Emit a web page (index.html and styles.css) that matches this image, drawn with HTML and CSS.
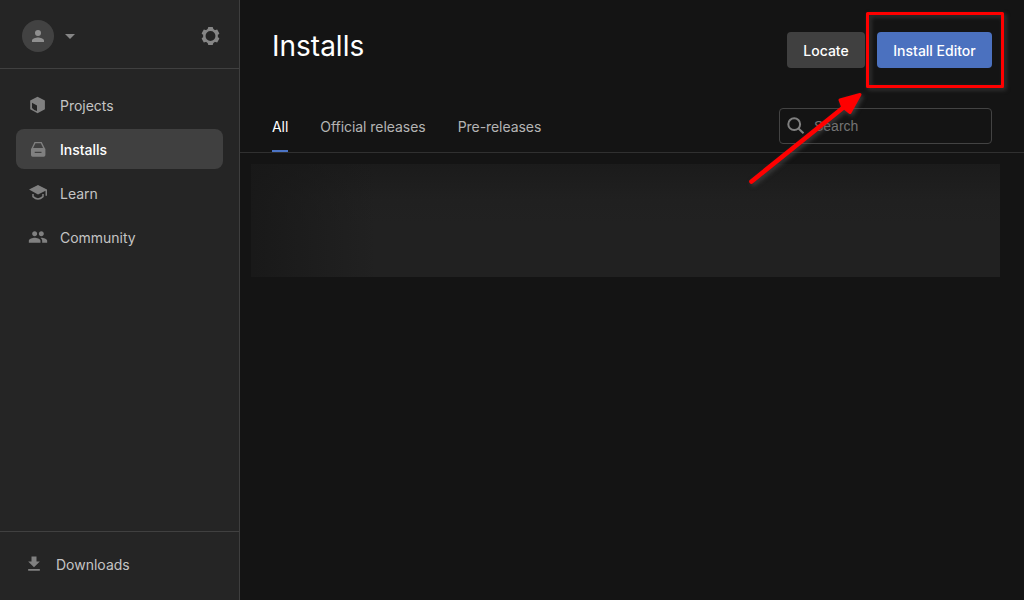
FILE: index.html
```html
<!DOCTYPE html>
<html lang="en">
<head>
<meta charset="utf-8">
<title>Installs</title>
<link rel="stylesheet" href="styles.css">
</head>
<body>
<div class="app">
  <aside class="sidebar">
    <header class="account">
      <div class="avatar"><svg width="18" height="18" viewBox="0 0 24 24"><path d="M12 12a4 4 0 1 0 0-8 4 4 0 0 0 0 8zm0 2c-2.700 0-8 1.300-8 4v2h16v-2c0-2.700-5.300-4-8-4z"/></svg></div>
      <svg class="caret" width="24" height="24" viewBox="0 0 24 24"><path d="M7 10l5 5 5-5z"/></svg>
      <svg class="gear" width="20" height="20" viewBox="-9.500 -10 20 20">
        <circle r="6.200" fill="none" stroke="currentColor" stroke-width="2.500"/>
        <path d="M-3-6.500L-2.200-9h4.400l.8 2.500zM-3 6.500L-2.200 9h4.400l.8-2.500z"/>
        <path transform="rotate(60)" d="M-3-6.500L-2.200-9h4.400l.8 2.500zM-3 6.500L-2.200 9h4.400l.8-2.500z"/>
        <path transform="rotate(120)" d="M-3-6.500L-2.200-9h4.400l.8 2.500zM-3 6.500L-2.200 9h4.400l.8-2.500z"/>
      </svg>
    </header>
    <nav class="nav">
      <a class="nav-item"><svg width="20" height="20" viewBox="0 0 20 20"><path fill-rule="evenodd" d="M9.500 1.700l7.400 3.800v8.700l-7.400 4-7.300-4V5.500zM4 7.800v5.200q2 2.300 5 3V10.500z"/></svg><span>Projects</span></a>
      <a class="nav-item active"><svg width="20" height="20" viewBox="0 0 20 20"><path fill-rule="evenodd" d="M6.500 3h7.200l2.900 5.800.8 1.300v5.900q0 1.700-1.700 1.700H4.700Q3 17.700 3 16v-5.900l.8-1.300zM7.400 4.300L5.100 9h10l-2.300-4.700zM6.700 12.700v1.400h6.800v-1.400z"/></svg><span>Installs</span></a>
      <a class="nav-item"><svg width="20" height="20" viewBox="0 0 20 20"><path d="M1 6.500l9-4.600 9 4.600v6.300h-1.500V7.800L10 11.600z"/><path d="M5 11v2.600q5 4.800 10 0V11" fill="none" stroke="currentColor" stroke-width="1.500"/></svg><span>Learn</span></a>
      <a class="nav-item"><svg width="20" height="20" viewBox="0 0 24 24"><path d="M16 11c1.660 0 2.990-1.340 2.990-3S17.660 5 16 5s-3 1.340-3 3 1.340 3 3 3zm-8 0c1.660 0 2.990-1.340 2.990-3S9.660 5 8 5 5 6.340 5 8s1.340 3 3 3zm0 2c-2.330 0-7 1.170-7 3.500V19h14v-2.500c0-2.330-4.670-3.500-7-3.500zm8 0c-.29 0-.62.020-.97.050 1.160.84 1.970 1.970 1.970 3.450V19h6v-2.500c0-2.330-4.670-3.500-7-3.500z"/></svg><span>Community</span></a>
    </nav>
    <footer class="downloads"><svg width="20" height="20" viewBox="0 0 24 24"><path d="M19 9h-4V3H9v6H5l7 7 7-7zM5 18v2h14v-2z"/></svg><span>Downloads</span></footer>
  </aside>
  <main class="main">
    <header class="page-head">
      <h1>Installs</h1>
      <div class="actions">
        <button class="btn">Locate</button>
        <button class="btn primary">Install Editor</button>
      </div>
    </header>
    <div class="toolbar">
      <div class="tabs">
        <a class="tab selected">All</a>
        <a class="tab">Official releases</a>
        <a class="tab">Pre-releases</a>
      </div>
      <div class="search">
        <svg width="18" height="18" viewBox="0.500 0.500 18 18"><path d="M12 12l5 4.800"/><circle cx="7.700" cy="7.700" r="5.900"/></svg>
        <span>Search</span>
      </div>
    </div>
    <section class="blurred"></section>
  </main>
  <svg class="annotation" width="1024" height="600" viewBox="0 0 1024 600">
    <rect x="867.500" y="13.500" width="135" height="73" fill="none" stroke="#f00" stroke-width="3" stroke-linejoin="round"/>
    <path d="M751.500 181.500L844 107" stroke="#f00" stroke-width="4.600" stroke-linecap="round"/>
    <path d="M860 94.500L840 100 842.500 106.500 850 112.500z" fill="#f00" stroke="#f00" stroke-width="3" stroke-linejoin="round"/>
  </svg>
</div>
</body>
</html>
```
FILE: styles.css
```css
* { box-sizing: border-box; }

body {
  margin: 0;
  background: #141414;
  color: #c4c4c4;
  font: 14px/20px Inter, "Liberation Sans", sans-serif;
}

svg { display: block; flex: none; fill: currentColor; }

.app {
  position: relative;
  display: flex;
  width: 1024px;
  height: 600px;
  overflow: hidden;
}

.sidebar {
  display: flex;
  flex-direction: column;
  width: 240px;
  background: #252525;
  border-right: 1px solid #3e3e3e;
}

.account {
  display: flex;
  align-items: center;
  height: 69px;
  padding: 3px 18px 0 22px;
  border-bottom: 1px solid #404040;
  color: #868686;
}

.avatar {
  display: grid;
  place-items: center;
  width: 32px;
  height: 32px;
  border-radius: 50%;
  background: #424242;
  color: #909090;
}

.caret { margin-left: 4px; }
.gear { margin-left: auto; }

.nav {
  display: flex;
  flex: 1;
  flex-direction: column;
  gap: 4px;
  padding: 16px;
}

.nav-item {
  display: flex;
  align-items: center;
  gap: 12px;
  height: 40px;
  padding: 0 12px;
  border-radius: 8px;
}

.nav-item span {
  padding-top: 2px;
  letter-spacing: -0.03px;
}

.nav-item svg,
.downloads svg { color: #808080; }

.active {
  background: #404040;
  color: #fff;
  font-weight: 500;
}

.downloads {
  display: flex;
  align-items: center;
  gap: 12px;
  height: 69px;
  padding: 0 24px 4px;
  border-top: 1px solid #404040;
}

.downloads span { padding-top: 2px; }

.main { flex: 1; }

.page-head {
  display: flex;
  justify-content: space-between;
  height: 96px;
  padding: 28px 32px 0;
}

h1 {
  margin: 0;
  color: #fff;
  font-size: 28px;
  font-weight: 400;
  line-height: 36px;
}

.actions {
  display: flex;
  gap: 12px;
  padding-top: 4px;
}

.btn {
  width: 78px;
  height: 36px;
  padding: 2px 0 0;
  border: 0;
  border-radius: 4px;
  background: #404040;
  color: #fff;
  font: 500 14px/20px Inter, sans-serif;
}

.primary {
  width: 115px;
  background: #4b71bf;
}

.toolbar {
  display: flex;
  justify-content: space-between;
  height: 57px;
  padding: 0 32px;
  border-bottom: 1px solid #303030;
}

.tabs { display: flex; gap: 32px; }

.tab {
  padding-top: 21px;
  border-bottom: 2px solid transparent;
  color: #b4b4b4;
  letter-spacing: -0.05px;
}

.selected { color: #fff; border-color: #4b74c5; }

.search {
  display: flex;
  align-items: center;
  gap: 9px;
  width: 213px;
  height: 36px;
  margin-top: 12px;
  padding: 0 7px;
  border: 1px solid #434343;
  border-radius: 4px;
  color: #757575;
  font-family: "Liberation Sans", Arial, sans-serif;
}

.search svg {
  fill: none;
  stroke: #808080;
  stroke-width: 2;
}

.blurred {
  height: 113px;
  margin: 11px 24px 0 11px;
  background:
    linear-gradient(90deg, rgba(24, 24, 24, 0.9), rgba(24, 24, 24, 0) 125px),
    linear-gradient(#1b1b1b, #202020 36px, #212121 60px);
}

.annotation {
  position: absolute;
  top: 0;
  left: 0;
  pointer-events: none;
  filter: drop-shadow(2px 2px 2px rgba(90, 90, 90, 0.55));
}
```
